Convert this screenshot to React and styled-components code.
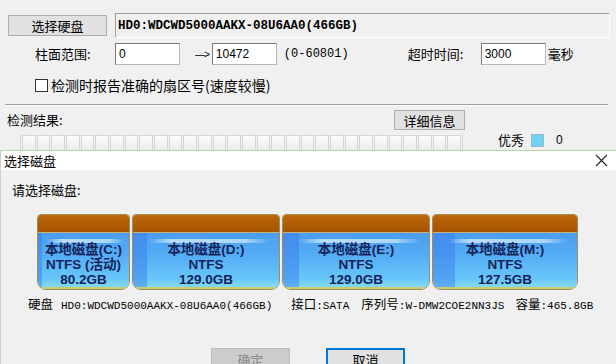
import React from 'react';
import styled, { createGlobalStyle } from 'styled-components';

const GlobalStyle = createGlobalStyle`
  html, body {
    margin: 0;
    padding: 0;
    background: #f0f0f0;
  }
  body {
    width: 616px;
    height: 364px;
    overflow: hidden;
    font-family: "Noto Sans CJK SC", sans-serif;
    font-size: 13px;
    color: #000;
  }
`;

const mono = `"Liberation Mono", "Noto Sans CJK SC", monospace`;

const Page = styled.div`
  display: flex;
  flex-direction: column;
  height: 364px;
`;

/* ---------- main window (behind the dialog) ---------- */

const MainPanel = styled.div`
  height: 137px;
  padding-top: 13px;
  overflow: hidden;
  display: flex;
  flex-direction: column;
`;

const Row = styled.div`
  display: flex;
  align-items: ${({ $align }) => $align || 'center'};
  padding-left: ${({ $indent }) => $indent || 0}px;
  margin-top: ${({ $top }) => $top || 0}px;
`;

const WinButton = styled.button`
  box-sizing: border-box;
  width: ${({ $w }) => $w}px;
  height: ${({ $h }) => $h || 21}px;
  margin-top: ${({ $mt }) => $mt || 0}px;
  padding: 0;
  background: #e1e1e1;
  border: 1px solid #adadad;
  font-family: "Noto Sans CJK SC", sans-serif;
  font-size: 13px;
  line-height: 1;
  color: #000;
`;

const DiskField = styled.div`
  box-sizing: border-box;
  width: 495px;
  height: 25px;
  margin-left: 8px;
  padding-left: 2px;
  border-top: 1px solid #a0a0a0;
  border-left: 1px solid #a0a0a0;
  border-bottom: 1px solid #fff;
  border-right: 1px solid #fff;
  display: flex;
  align-items: center;
  font-family: ${mono};
  font-weight: bold;
  font-size: 12.5px;
`;

const Label = styled.span`
  display: inline-block;
  width: ${({ $w }) => ($w ? `${$w}px` : 'auto')};
  margin-left: ${({ $ml }) => $ml || 0}px;
  font-size: 13px;
  line-height: 16px;
  white-space: nowrap;
`;

const MonoText = styled.span`
  margin-left: ${({ $ml }) => $ml || 0}px;
  font-family: ${mono};
  font-size: 12px;
  white-space: nowrap;
`;

const Input = styled.div`
  box-sizing: border-box;
  width: 65px;
  height: 22px;
  padding: 2px 3px 0;
  background: #fff;
  border: 1px solid #7a7a7a;
  border-right-color: #b8b8b8;
  border-bottom-color: #b8b8b8;
  font-family: "Liberation Sans", sans-serif;
  font-size: 12px;
  line-height: 16px;
`;

const Arrow = styled.span`
  margin: 0 3px 0 15px;
  font-family: "Liberation Sans", sans-serif;
  font-size: 10px;
  letter-spacing: -1px;
  white-space: nowrap;
`;

const CheckBox = styled.span`
  box-sizing: border-box;
  width: 13px;
  height: 13px;
  border: 1px solid #333;
  background: #fff;
`;

const CheckLabel = styled.span`
  margin-left: 3px;
  font-size: 14px;
  line-height: 16px;
  white-space: nowrap;
`;

const Separator = styled.div`
  margin: 11px 8px 0 5px;
  border-top: 1px solid #a0a0a0;
  border-bottom: 1px solid #fff;
`;

const CellGrid = styled.div`
  display: grid;
  grid-template-columns: repeat(30, 1fr);
  gap: 1px;
  width: 443px;
  height: 22px;
  padding: 1px;
  box-sizing: border-box;
  border-left: 1px solid #d8d8d8;
  border-right: 1px solid #d8d8d8;
`;

const Cell = styled.span`
  border: 1px solid #d6d6d6;
  background: linear-gradient(#fbfbfb, #e9e9e9);
`;

const Legend = styled.div`
  display: flex;
  align-items: center;
  align-self: flex-start;
  margin-left: 35px;
  margin-top: -2px;
`;

const Swatch = styled.span`
  box-sizing: border-box;
  width: 13px;
  height: 13px;
  margin-left: 7px;
  background: ${({ $color }) => $color};
  border: 1px solid #9bb8c8;
`;

const Count = styled.span`
  margin-left: 12px;
  font-family: "Liberation Sans", sans-serif;
  font-size: 12px;
`;

/* ---------- dialog ---------- */

const Dialog = styled.div`
  flex: 1;
  display: flex;
  flex-direction: column;
  border-top: 1px solid #b7d8a2;
  border-left: 1px solid #cfcfcf;
  overflow: hidden;
`;

const TitleBar = styled.div`
  height: 28px;
  background: #fff;
  display: flex;
  align-items: center;
  justify-content: space-between;
  padding: 0 8px 0 3px;
  font-size: 13px;
`;

const DialogBody = styled.div`
  flex: 1;
  background: #f0f0f0;
  display: flex;
  flex-direction: column;
`;

const Prompt = styled.div`
  margin-top: 12px;
  padding-left: 11px;
  font-size: 13px;
  line-height: 16px;
`;

const TileRow = styled.div`
  display: flex;
  gap: 2px;
  margin-top: 16px;
  padding-left: 36px;
`;

const Tile = styled.div`
  box-sizing: border-box;
  width: ${({ $w }) => $w}px;
  height: 76px;
  display: flex;
  flex-direction: column;
  border: 1px solid #a38c58;
  border-radius: 4px 4px 9px 9px;
  overflow: hidden;
`;

const TileHead = styled.div`
  height: 17px;
  background: linear-gradient(#bd680a, #a65300);
  border-bottom: 1px solid #c9b07a;
`;

const TileBody = styled.div`
  position: relative;
  flex: 1;
  padding-top: 9px;
  background: linear-gradient(#4b9df0 0%, #56aff5 45%, #68c6f9 85%, #84dbf7 100%);
  border-bottom: 2px solid #c6cb72;
  text-align: center;
  color: #14245a;
  font-family: "Liberation Sans", "Noto Sans CJK SC", sans-serif;
  font-weight: bold;
  font-size: 13.5px;
  line-height: 15px;

  &::before {
    content: '';
    position: absolute;
    left: 0;
    top: 0;
    bottom: 0;
    width: ${({ $band }) => $band}px;
    background: rgba(55, 120, 235, 0.45);
  }

  &::after {
    content: '';
    position: absolute;
    left: 10%;
    right: 6%;
    top: 6px;
    height: 4px;
    border-radius: 2px;
    background: linear-gradient(90deg, rgba(255,255,255,0), rgba(220,240,255,0.75) 20%, rgba(220,240,255,0.65) 80%, rgba(255,255,255,0));
  }
`;

const TileLine = styled.div`
  position: relative;
  z-index: 1;
  white-space: nowrap;
`;

const InfoLine = styled.div`
  display: flex;
  align-items: center;
  margin-top: 7px;
  padding-left: 27px;
  line-height: 14px;
  white-space: nowrap;
`;

const InfoItem = styled.span`
  margin-right: ${({ $gap }) => $gap}px;
  font-size: 12.5px;
`;

const InfoMono = styled.span`
  font-family: ${mono};
  font-size: 11px;
  margin-left: ${({ $ml }) => $ml || 0}px;
`;

const ButtonRow = styled.div`
  display: flex;
  gap: 36px;
  margin-top: 35px;
  padding-left: 210px;
`;

const DialogButton = styled.button`
  box-sizing: border-box;
  width: 79px;
  height: 23px;
  padding: 0;
  font-family: "Noto Sans CJK SC", sans-serif;
  font-size: 13px;
  line-height: 1;
  background: ${({ $disabled }) => ($disabled ? '#cccccc' : '#e1e1e1')};
  color: ${({ $disabled }) => ($disabled ? '#8a8a8a' : '#000')};
  border: ${({ $disabled }) => ($disabled ? '1px solid #bfbfbf' : '2px solid #0078d7')};
`;

const disks = [
  { name: '本地磁盘(C:)', fs: 'NTFS (活动)', size: '80.2GB', width: 93, band: 4 },
  { name: '本地磁盘(D:)', fs: 'NTFS', size: '129.0GB', width: 148, band: 14 },
  { name: '本地磁盘(E:)', fs: 'NTFS', size: '129.0GB', width: 148, band: 16 },
  { name: '本地磁盘(M:)', fs: 'NTFS', size: '127.5GB', width: 146, band: 22 },
];

function CloseIcon() {
  return (
    <svg width="13" height="13" viewBox="0 0 13 13">
      <path d="M1 1 L12 12 M12 1 L1 12" stroke="#222" strokeWidth="1.1" fill="none" />
    </svg>
  );
}

export default function App() {
  return (
    <Page>
      <GlobalStyle />
      <MainPanel>
        <Row $indent={8} $align="flex-start">
          <WinButton $w={99} $mt={2}>选择硬盘</WinButton>
          <DiskField>HD0:WDCWD5000AAKX-08U6AA0(466GB)</DiskField>
        </Row>
        <Row $indent={35} $top={5}>
          <Label $w={80}>柱面范围:</Label>
          <Input>0</Input>
          <Arrow>—&gt;</Arrow>
          <Input>10472</Input>
          <MonoText $ml={7}>(0-60801)</MonoText>
          <Label $w={73} $ml={59}>超时时间:</Label>
          <Input>3000</Input>
          <Label $ml={2}>毫秒</Label>
        </Row>
        <Row $indent={35} $top={12}>
          <CheckBox />
          <CheckLabel>检测时报告准确的扇区号(速度较慢)</CheckLabel>
        </Row>
        <Separator />
        <Row $indent={7} $top={4}>
          <Label $w={387}>检测结果:</Label>
          <WinButton $w={71} $h={20}>详细信息</WinButton>
        </Row>
        <Row $indent={20} $top={4}>
          <CellGrid>
            {Array.from({ length: 30 }, (_, i) => (
              <Cell key={i} />
            ))}
          </CellGrid>
          <Legend>
            <Label>优秀</Label>
            <Swatch $color="#6fd2f2" />
            <Count>0</Count>
          </Legend>
        </Row>
      </MainPanel>

      <Dialog>
        <TitleBar>
          <span>选择磁盘</span>
          <CloseIcon />
        </TitleBar>
        <DialogBody>
          <Prompt>请选择磁盘:</Prompt>
          <TileRow>
            {disks.map((d) => (
              <Tile key={d.name} $w={d.width}>
                <TileHead />
                <TileBody $band={d.band}>
                  <TileLine>{d.name}</TileLine>
                  <TileLine>{d.fs}</TileLine>
                  <TileLine>{d.size}</TileLine>
                </TileBody>
              </Tile>
            ))}
          </TileRow>
          <InfoLine>
            <InfoItem $gap={19}>
              硬盘<InfoMono $ml={8}>HD0:WDCWD5000AAKX-08U6AA0(466GB)</InfoMono>
            </InfoItem>
            <InfoItem $gap={12}>
              接口<InfoMono>:SATA</InfoMono>
            </InfoItem>
            <InfoItem $gap={11}>
              序列号<InfoMono>:W-DMW2COE2NN3JS</InfoMono>
            </InfoItem>
            <InfoItem $gap={0}>
              容量<InfoMono>:465.8GB</InfoMono>
            </InfoItem>
          </InfoLine>
          <ButtonRow>
            <DialogButton $disabled>确定</DialogButton>
            <DialogButton>取消</DialogButton>
          </ButtonRow>
        </DialogBody>
      </Dialog>
    </Page>
  );
}
